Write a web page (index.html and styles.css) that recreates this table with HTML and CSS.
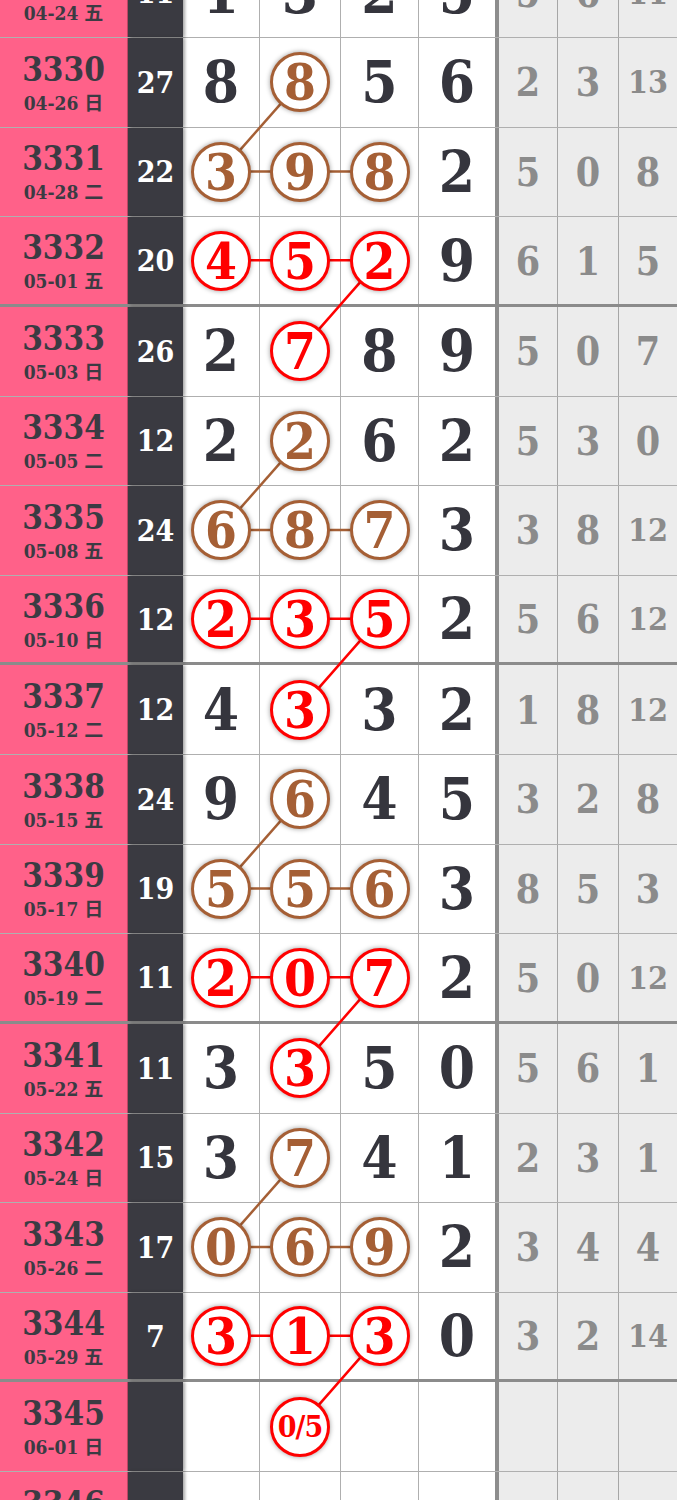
FILE: index.html
```html
<!DOCTYPE html>
<html lang="zh">
<head>
    <meta charset="UTF-8">
    <meta name="viewport" content="width=device-width, initial-scale=1.0">
    <title>走势图</title>
    <link rel="stylesheet" href="styles.css">
</head>
<body>
    <div class="board" id="board">
        <div id="rows"></div>
        <svg id="links" class="links"></svg>
    </div>

    <script>
        // 期号, 日期, 和值, 四个号码, 右侧三列, 标记 (b = 棕色, r = 红色)
        const draws = [
            ["3329", "04-24 五", 11, [1, 3, 2, 5], [5, 6, 11], "----"],
            ["3330", "04-26 日", 27, [8, 8, 5, 6], [2, 3, 13], "-b--"],
            ["3331", "04-28 二", 22, [3, 9, 8, 2], [5, 0, 8], "bbb-"],
            ["3332", "05-01 五", 20, [4, 5, 2, 9], [6, 1, 5], "rrr-"],
            ["3333", "05-03 日", 26, [2, 7, 8, 9], [5, 0, 7], "-r--"],
            ["3334", "05-05 二", 12, [2, 2, 6, 2], [5, 3, 0], "-b--"],
            ["3335", "05-08 五", 24, [6, 8, 7, 3], [3, 8, 12], "bbb-"],
            ["3336", "05-10 日", 12, [2, 3, 5, 2], [5, 6, 12], "rrr-"],
            ["3337", "05-12 二", 12, [4, 3, 3, 2], [1, 8, 12], "-r--"],
            ["3338", "05-15 五", 24, [9, 6, 4, 5], [3, 2, 8], "-b--"],
            ["3339", "05-17 日", 19, [5, 5, 6, 3], [8, 5, 3], "bbb-"],
            ["3340", "05-19 二", 11, [2, 0, 7, 2], [5, 0, 12], "rrr-"],
            ["3341", "05-22 五", 11, [3, 3, 5, 0], [5, 6, 1], "-r--"],
            ["3342", "05-24 日", 15, [3, 7, 4, 1], [2, 3, 1], "-b--"],
            ["3343", "05-26 二", 17, [0, 6, 9, 2], [3, 4, 4], "bbb-"],
            ["3344", "05-29 五", 7, [3, 1, 3, 0], [3, 2, 14], "rrr-"],
            ["3345", "06-01 日", "", ["", "0/5", "", ""], ["", "", ""], "-r--"],
            ["3346", "06-03 二", "", ["", "", "", ""], ["", "", ""], "----"]
        ];

        const rowsDiv = document.getElementById("rows");

        draws.forEach((d, i) => {
            const [no, date, sum, nums, extra, marks] = d;
            const end = no % 4 === 0 ? " end" : "";

            let cells = `
                <div class="cell issue"><span class="no">${no}</span><span class="date">${date}</span></div>
                <div class="cell sum">${sum}</div>`;

            nums.forEach((n, c) => {
                const m = marks[c];
                if (m === "-") {
                    cells += `<div class="cell num">${n}</div>`;
                } else {
                    const small = String(n).length > 1 ? " small" : "";
                    cells += `<div class="cell num"><span class="ball ${m}${small}" id="b-${i}-${c}">${n}</span></div>`;
                }
            });

            extra.forEach(n => {
                const small = String(n).length > 1 ? " small" : "";
                cells += `<div class="cell extra${small}">${n}</div>`;
            });

            rowsDiv.innerHTML += `<div class="row${end}">${cells}</div>`;
        });

        // 连线: 每四期一组
        const links = [];
        [1, 5, 9, 13].forEach(r => {
            links.push(
                [[r, 1], [r + 1, 0], "b"], [[r + 1, 0], [r + 1, 1], "b"], [[r + 1, 1], [r + 1, 2], "b"],
                [[r + 2, 0], [r + 2, 1], "r"], [[r + 2, 1], [r + 2, 2], "r"], [[r + 2, 2], [r + 3, 1], "r"]
            );
        });

        const board = document.getElementById("board").getBoundingClientRect();
        const center = (r, c) => {
            const box = document.getElementById(`b-${r}-${c}`).getBoundingClientRect();
            return [box.left + box.width / 2 - board.left, box.top + box.height / 2 - board.top];
        };

        let svg = "";
        links.forEach(([a, b, color]) => {
            const [x1, y1] = center(a[0], a[1]);
            const [x2, y2] = center(b[0], b[1]);
            svg += `<line class="${color}" x1="${x1}" y1="${y1}" x2="${x2}" y2="${y2}"></line>`;
        });
        document.getElementById("links").innerHTML = svg;
    </script>
</body>
</html>
```

FILE: styles.css
```css
body {
    margin: 0;
    background: #fff;
    font-family: "DejaVu Serif", "Noto Sans CJK SC", serif;
    font-stretch: condensed;
    font-weight: bold;
    overflow: hidden;
}
.board {
    position: relative;
    width: 677px;
    margin-top: -51.6px;
}
.row {
    display: grid;
    grid-template-columns: 128px 55px 77px 81px 78px 80px 59px 61px 58px;
    height: 89.625px;
    box-sizing: border-box;
    border-bottom: 1px solid rgba(110, 110, 110, 0.55);
}
.row.end {
    border-bottom: 3px solid rgba(100, 100, 100, 0.75);
}
.cell {
    display: flex;
    align-items: center;
    justify-content: center;
    box-sizing: border-box;
    border-right: 1px solid rgba(110, 110, 110, 0.55);
}
.issue {
    flex-direction: column;
    background: #ff6189;
    color: #3b3b43;
    border-right: 1px solid rgba(0, 0, 0, 0.25);
}
.issue .no {
    font-size: 33px;
    line-height: 36px;
    margin-top: 2px;
}
.issue .date {
    font-size: 19px;
    line-height: 24px;
    margin-top: 3px;
}
.sum {
    background: #3a3a41;
    color: #fff;
    font-size: 30px;
    border-right: none;
    box-shadow: 2px 0 3px rgba(0, 0, 0, 0.35);
}
.num {
    color: #35353d;
    font-size: 58px;
}
.num:nth-child(6) {
    border-right: 4px solid #8d8d8d;
}
.extra {
    background: #ececec;
    color: #8b8b8b;
    font-size: 39px;
}
.extra.small {
    font-size: 32px;
}
.extra:last-child {
    border-right: none;
}
.ball {
    position: relative;
    z-index: 2;
    display: flex;
    align-items: center;
    justify-content: center;
    width: 60px;
    height: 60px;
    box-sizing: border-box;
    border: 3px solid;
    border-radius: 50%;
    background: #fff;
    font-size: 51px;
    box-shadow: 0 0 5px rgba(0, 0, 0, 0.4);
}
.ball.b {
    color: #a55f35;
}
.ball.r {
    color: #f00;
}
.ball.small {
    font-size: 30px;
    letter-spacing: -1px;
}
.links {
    position: absolute;
    top: 0;
    left: 0;
    width: 100%;
    height: 100%;
    z-index: 1;
    pointer-events: none;
}
.links line {
    stroke-width: 2.5;
}
.links line.b {
    stroke: #a55f35;
}
.links line.r {
    stroke: #f00;
}
```
